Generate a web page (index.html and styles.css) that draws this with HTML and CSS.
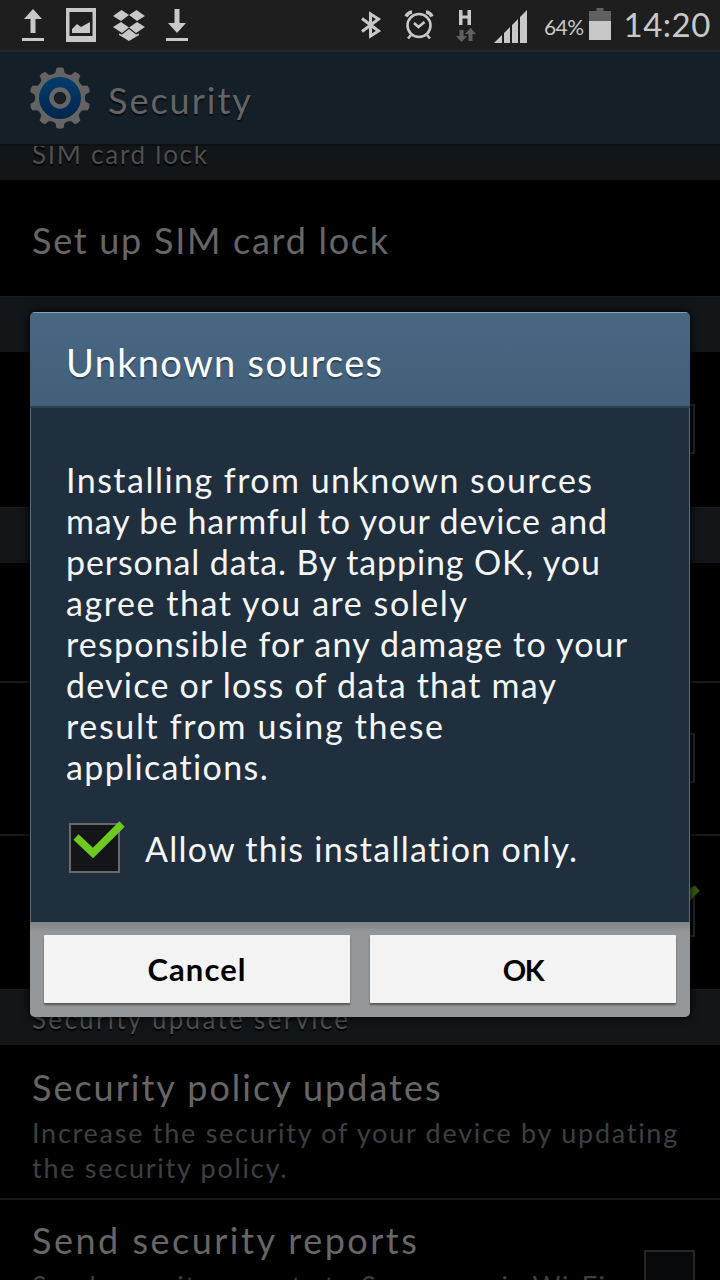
FILE: index.html
```html
<!DOCTYPE html>
<html lang="en">
<head>
<meta charset="utf-8">
<title>Security</title>
<link rel="stylesheet" href="styles.css">
</head>
<body>
<div class="screen">
  <header class="status">
    <svg class="status-icons" width="720" height="50" viewBox="0 0 720 50" fill="#c8c8c8">
      <path d="M33 9l9 10h-6.500v14h-5V19H24zM22 38h22v3H22z"/>
      <path fill-rule="evenodd" d="M66 8h30v34H66zM69.500 12v24h23V12z"/>
      <path d="M72 33v-4l5-5 4 3 9-5v11z"/>
      <path d="M121.500 10l7.500 5-8 6-8-5zM136.500 10l8.500 6-8 5-8-6zM121 22l8 5.500-7 5.500-9-6zM137 22l8 5-9 6-7-5.500zM129 29l7 5.500 3-1v1.500l-10 6-10-6v-1.500l3 1z"/>
      <path d="M174.500 9h5v14h6.500l-9 10-9-10h6.500zM166 38h22v3h-22z"/>
      <path d="M362 18.500L378.500 31 370.500 36V14L378.500 19 362 31.500" fill="none" stroke="#c8c8c8" stroke-width="3"/>
      <g fill="none" stroke="#c8c8c8" stroke-width="2.600"><circle cx="419" cy="25.500" r="11.500"/><path d="M414 23l4.500 4 6-5M411 35l-3 3.500M427 35l3 3.500"/><path d="M406 16.500q2-4 6-4.500M432 16.500q-2-4-6-4.500" stroke-width="3.600"/></g>
      <path d="M459 10h3.500v5.500h5V10h3.500v15h-3.500v-6.500h-5V25H459z"/>
      <path fill="#606060" d="M459.500 30h4v6h3.500l-5.500 6-5.500-6h3.500zM468.500 41h4v-7h3.500l-5.500-6-5.500 6h3.500z"/>
      <path d="M494 43l8-8v8zM504 33l6-6v16h-6zM512 25l6-6v24h-6zM520 17l7-7v33h-7z"/>
      <path fill="#606060" d="M589 21V11h7.500V8h7v3h7.500v10z"/><path d="M589 21h22v19h-22z"/>
    </svg>
    <span class="battery">64%</span>
    <span class="clock">14:20</span>
  </header>
  <div class="appbar">
    <svg class="gear" width="62" height="62" viewBox="0 0 62 62">
      <defs><linearGradient id="blue" x1="0" y1="0" x2="0" y2="1"><stop offset="0" stop-color="#003d6c"/><stop offset="1" stop-color="#00254d"/></linearGradient></defs>
      <g fill="#646464"><circle cx="31" cy="31" r="25"/>
      <g id="teeth"><path id="t" d="M23.500 8L26.500 5.500 27.500 1Q31-.3 34.500 1L35.500 5.500 38.500 8z"/><use href="#t" transform="rotate(36 31 31)"/><use href="#t" transform="rotate(72 31 31)"/><use href="#t" transform="rotate(108 31 31)"/><use href="#t" transform="rotate(144 31 31)"/></g><use href="#teeth" transform="rotate(180 31 31)"/></g>
      <circle cx="31" cy="31" r="21" fill="url(#blue)"/>
      <circle cx="31" cy="31" r="8.500" fill="#171f27" stroke="#666" stroke-width="4.500"/>
    </svg>
    <h1>Security</h1>
  </div>
  <main class="list">
    <div class="section first"><span class="ls-sim">SIM card lock</span></div>
    <div class="row r1"><span class="title ls-setup">Set up SIM card lock</span></div>
    <div class="section"></div>
    <div class="row r2"><i class="box"></i></div>
    <div class="section"></div>
    <div class="row r3"></div>
    <div class="row r4"><i class="box"></i></div>
    <div class="row r5"><i class="box"><svg class="tick" width="52" height="38" viewBox="0 0 52 38"><path d="M3 16L20 32 49 3" fill="none" stroke="#326010" stroke-width="7.500"/></svg></i></div>
    <div class="section"><span class="ls-service">Security update service</span></div>
    <div class="row r6"><span class="title ls-policy">Security policy updates</span><p class="sub">Increase the security of your device by updating<br>the security policy.</p></div>
    <div class="row r7"><div><span class="title ls-reports">Send security reports</span><p class="sub ls-send">Send security reports to Samsung via Wi-Fi</p></div><i class="box"></i></div>
  </main>
  <div class="dialog">
    <h2>Unknown sources</h2>
    <div class="content">
      <p><span class="l1">Installing from unknown sources</span><br><span class="l2">may be harmful to your device and</span><br><span class="l3">personal data. By tapping OK, you</span><br><span class="l4">agree that you are solely</span><br><span class="l5">responsible for any damage to your</span><br><span class="l6">device or loss of data that may</span><br><span class="l7">result from using these</span><br><span class="l8">applications.</span></p>
      <label><i class="box"><svg class="tick" width="52" height="38" viewBox="0 0 52 38"><path d="M3 16L20 32 49 3" fill="none" stroke="#6fc81e" stroke-width="7.500"/></svg></i><span>Allow this installation only.</span></label>
    </div>
    <div class="actions"><button class="cancel">Cancel</button><button class="ok">OK</button></div>
  </div>
</div>
</body>
</html>
```
FILE: styles.css
```css
* { box-sizing: border-box; }
body { margin: 0; background: #000; font-family: Lato, "Open Sans", sans-serif; }
h1, h2, p { margin: 0; font-weight: 400; }
.screen { position: relative; width: 720px; height: 1280px; overflow: hidden; display: flex; flex-direction: column; white-space: nowrap; }
.status { position: relative; flex: none; height: 50px; background: #1e1e1e; color: #c8c8c8; display: flex; justify-content: flex-end; align-items: center; padding-right: 9px; }
.status-icons { position: absolute; left: 0; top: 0; }
.battery { font-size: 21px; letter-spacing: -0.6px; margin-right: 40px; padding-top: 2px; }
.clock { font-size: 33px; letter-spacing: 0.55px; padding-bottom: 2px; }
.appbar { flex: none; height: 96px; border-top: 2px solid #202a31; border-bottom: 2px solid #0b1217; background: #151f28; display: flex; align-items: center; gap: 17px; padding-left: 29px; color: #646464; }
.gear { margin-bottom: 1px; }
.appbar h1 { font-size: 36px; line-height: 44px; padding-top: 3px; letter-spacing: 2px; text-shadow: 0 2px 1px #080c10; }
.list { flex: 1; overflow: hidden; color: #666; }
.section { height: 56px; background: #121619; border-top: 1px solid #171c1f; padding: 11px 32px 0; font-size: 26px; line-height: 36px; color: #4d4f50; text-shadow: 0 2px 1px #000; }
.section.first { margin-top: -22px; }
.row { display: flex; align-items: center; padding: 0 25px 0 32px; border-bottom: 2px solid #191919; }
.r1 { height: 116px; border: 0; padding-top: 3px; }
.r2 { height: 155px; border: 0; padding-bottom: 1px; }
.r3 { height: 120px; }
.r4 { height: 153px; padding-bottom: 1px; }
.r5 { height: 153px; border: 0; padding-bottom: 1px; }
.r6 { height: 155px; display: block; padding-top: 18px; }
.r7 { height: 152px; align-items: flex-start; padding-top: 16px; }
.title { display: block; font-size: 36px; line-height: 48px; }
.sub { font-size: 27px; line-height: 35px; letter-spacing: 1.74px; color: #3b4042; padding-top: 4px; }
.ls-sim { letter-spacing: 1.73px; }
.ls-setup { letter-spacing: 1.72px; }
.ls-service { letter-spacing: 2.31px; }
.ls-policy { letter-spacing: 2px; }
.ls-reports { letter-spacing: 2.5px; }
.ls-send { letter-spacing: 1.57px; }
.box { position: relative; display: block; flex: none; width: 51px; height: 50px; margin-left: auto; border: 2px solid #262626; background: #08090b; }
.r7 .box { margin-top: 34px; }
.tick { position: absolute; left: 2px; top: -4px; }
.dialog { position: absolute; left: 30px; top: 312px; width: 660px; height: 705px; border-radius: 5px; overflow: hidden; display: flex; flex-direction: column; background: #1f2f3d; color: #f5f5f5; box-shadow: 0 0 8px #000; }
.dialog h2 { height: 96px; border-top: 1px solid #8ba0b2; border-bottom: 2px solid #2c4355; background: linear-gradient(#486783, #43607a); padding: 0 36px; font-size: 38px; line-height: 99px; letter-spacing: 1.31px; color: #fff; text-shadow: 0 2px 1px #2c4355; }
.content { flex: 1; border: solid #606c75; border-width: 0 1px; padding: 51px 35px 0; }
.content p { font-size: 34px; line-height: 41px; }
.l1 { letter-spacing: 1.47px; }
.l2 { letter-spacing: 0.85px; }
.l3 { letter-spacing: 0.88px; }
.l4 { letter-spacing: 1.56px; }
.l5 { letter-spacing: 1.19px; }
.l6 { letter-spacing: 1.23px; }
.l7 { letter-spacing: 1.65px; }
.l8 { letter-spacing: 1.35px; }
.content label { display: flex; align-items: center; gap: 25px; margin-top: 36px; padding-left: 3px; font-size: 34px; letter-spacing: 1.25px; }
.content .box { margin: 0; border-color: #68696b; background: #141519; }
.actions { height: 95px; background: linear-gradient(#7e8386, #94989b 10px); display: flex; gap: 20px; padding: 13px 14px; }
.actions button { flex: 1; height: 68px; border: 0; border-radius: 1px; background: #f3f3f3; box-shadow: 0 2px 2px #55595c; color: #000; font: 700 31px Lato, sans-serif; padding: 0; }
.actions .cancel { letter-spacing: 1.1px; }
.actions .ok { font-size: 29px; letter-spacing: -1.5px; }
```
